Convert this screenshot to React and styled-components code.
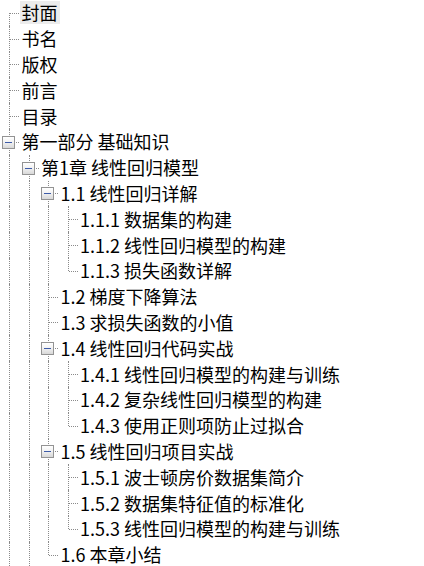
import React from "react";
import styled, { createGlobalStyle } from "styled-components";

const GlobalStyle = createGlobalStyle`
  html, body {
    margin: 0;
    padding: 0;
    background: #ffffff;
    overflow: hidden;
  }
  body {
    font-family: "Noto Sans CJK SC", "Noto Sans", sans-serif;
  }
`;

const ROW_H = 25.8;
const INDENT = 19.5;
const LINE = "1px dotted #8a8a8a";

// "more" marks nodes whose following siblings lie beyond the visible part
const toc = [
  { title: "封面", selected: true },
  { title: "书名" },
  { title: "版权" },
  { title: "前言" },
  { title: "目录" },
  {
    title: "第一部分 基础知识",
    more: true,
    children: [
      {
        title: "第1章 线性回归模型",
        more: true,
        children: [
          {
            title: "1.1 线性回归详解",
            children: [
              { title: "1.1.1 数据集的构建" },
              { title: "1.1.2 线性回归模型的构建" },
              { title: "1.1.3 损失函数详解" },
            ],
          },
          { title: "1.2 梯度下降算法" },
          { title: "1.3 求损失函数的小值" },
          {
            title: "1.4 线性回归代码实战",
            children: [
              { title: "1.4.1 线性回归模型的构建与训练" },
              { title: "1.4.2 复杂线性回归模型的构建" },
              { title: "1.4.3 使用正则项防止过拟合" },
            ],
          },
          {
            title: "1.5 线性回归项目实战",
            children: [
              { title: "1.5.1 波士顿房价数据集简介" },
              { title: "1.5.2 数据集特征值的标准化" },
              { title: "1.5.3 线性回归模型的构建与训练" },
            ],
          },
          { title: "1.6 本章小结" },
        ],
      },
    ],
  },
];

const Tree = styled.div`
  display: flex;
  flex-direction: column;
`;

const Row = styled.div`
  display: flex;
  align-items: center;
  height: ${ROW_H}px;
  white-space: nowrap;
`;

const Guide = styled.span`
  position: relative;
  flex: 0 0 ${INDENT}px;
  align-self: stretch;

  &::before {
    content: "";
    display: ${(p) => (p.$on ? "block" : "none")};
    position: absolute;
    left: 9px;
    top: 0;
    bottom: 0;
    border-left: ${LINE};
  }
`;

const Connector = styled.span`
  position: relative;
  flex: 0 0 ${INDENT}px;
  align-self: stretch;

  &::before {
    content: "";
    position: absolute;
    left: 9px;
    top: ${(p) => (p.$first ? "50%" : "0")};
    bottom: ${(p) => (p.$last ? "50%" : "0")};
    border-left: ${LINE};
  }

  &::after {
    content: "";
    position: absolute;
    left: 10px;
    width: 9px;
    top: 50%;
    border-top: ${LINE};
  }
`;

const Expander = styled.span`
  position: absolute;
  z-index: 1;
  left: 2px;
  top: 50%;
  width: 13px;
  height: 13px;
  margin-top: -6px;
  box-sizing: border-box;
  border: 1px solid #939393;
  background: linear-gradient(#ffffff 0%, #f2f2f2 45%, #d8d8d8 100%);

  &::after {
    content: "";
    position: absolute;
    left: 2px;
    right: 2px;
    top: 5px;
    height: 1px;
    background: #3d5ba8;
  }
`;

const Label = styled.span`
  height: 23px;
  line-height: 23px;
  padding: 0 2px;
  font-size: 18px;
  color: #000000;
  background: ${(p) => (p.$selected ? "#ececec" : "transparent")};
`;

function flatten(nodes, depth, guides, out, isRoot) {
  nodes.forEach((node, i) => {
    const last = i === nodes.length - 1 && !node.more;
    out.push({
      node,
      depth,
      guides,
      last,
      first: isRoot && i === 0,
    });
    if (node.children && node.children.length) {
      flatten(node.children, depth + 1, [...guides, !last], out, false);
    }
  });
  return out;
}

export default function App() {
  const rows = flatten(toc, 0, [], [], true);
  return (
    <>
      <GlobalStyle />
      <Tree>
        {rows.map(({ node, guides, last, first }, idx) => (
          <Row key={idx}>
            {guides.map((on, g) => (
              <Guide key={g} $on={on} />
            ))}
            <Connector $last={last} $first={first}>
              {node.children && <Expander />}
            </Connector>
            <Label $selected={node.selected}>{node.title}</Label>
          </Row>
        ))}
      </Tree>
    </>
  );
}
